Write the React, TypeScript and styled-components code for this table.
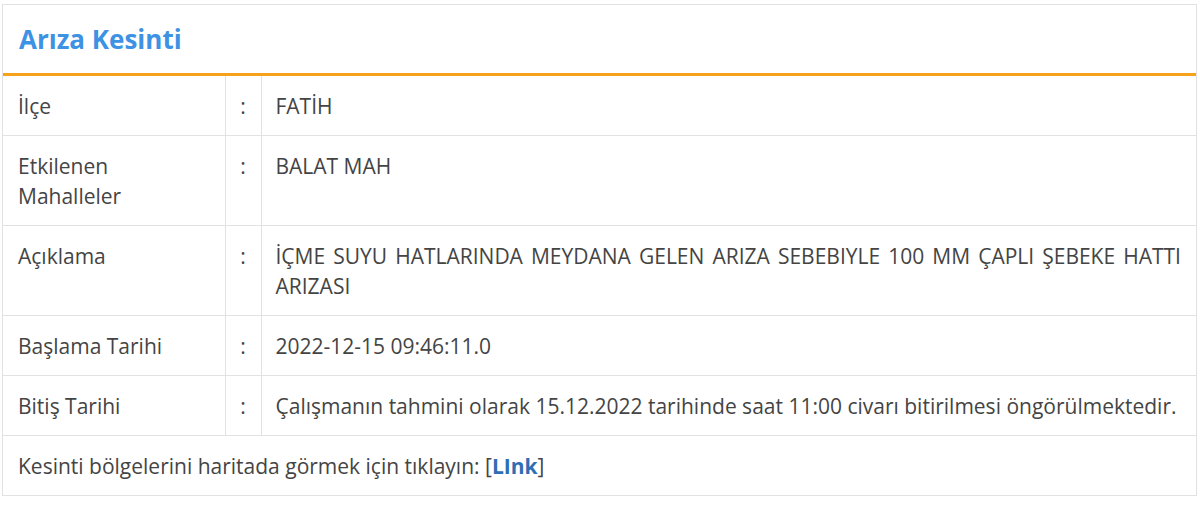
import styled, { createGlobalStyle } from "styled-components"

const GlobalStyle = createGlobalStyle`
  body {
    margin: 0;
    background: #fff;
    font-family: "Open Sans", "Noto Sans", sans-serif;
    color: #444;
  }
`

type Row = { label: string; value: string; justify?: boolean }

const rows: Row[] = [
  { label: "İlçe", value: "FATİH" },
  { label: "Etkilenen Mahalleler", value: "BALAT MAH" },
  {
    label: "Açıklama",
    value: "İÇME SUYU HATLARINDA MEYDANA GELEN ARIZA SEBEBIYLE 100 MM ÇAPLI ŞEBEKE HATTI ARIZASI",
    justify: true,
  },
  { label: "Başlama Tarihi", value: "2022-12-15 09:46:11.0" },
  {
    label: "Bitiş Tarihi",
    value: "Çalışmanın tahmini olarak 15.12.2022 tarihinde saat 11:00 civarı bitirilmesi öngörülmektedir.",
  },
]

export default function App() {
  return (
    <>
      <GlobalStyle />
      <Panel>
        <Header>
          <Title>Arıza Kesinti</Title>
        </Header>
        <Table>
          <colgroup>
            <col style={{ width: 222 }} />
            <col style={{ width: 36 }} />
            <col />
          </colgroup>
          <tbody>
            {rows.map((r) => (
              <tr key={r.label}>
                <Label>{r.label}</Label>
                <Colon>:</Colon>
                <Value $justify={r.justify}>{r.value}</Value>
              </tr>
            ))}
            <tr>
              <Footer colSpan={3}>
                Kesinti bölgelerini haritada görmek için tıklayın: [<Link href="#">LInk</Link>]
              </Footer>
            </tr>
          </tbody>
        </Table>
      </Panel>
    </>
  )
}

const Panel = styled.div`
  margin: 4px 0 0 2px;
  width: 1195px;
  box-sizing: border-box;
  border: 1px solid #e2e2e2;
  background: #fff;
`

const Header = styled.div`
  height: 68px;
  display: flex;
  align-items: center;
  padding: 0 16px;
  border-bottom: 3px solid #f7a21b;
`

const Title = styled.h3`
  margin: 0;
  font-size: 26px;
  font-weight: 700;
  color: #3d92e4;
`

const Table = styled.table`
  width: 100%;
  border-collapse: collapse;
  table-layout: fixed;
  font-size: 21px;
  line-height: 30px;

  td {
    border-top: 1px solid #e2e2e2;
    vertical-align: top;
  }
  tr:first-child td {
    border-top: none;
  }
`

const Label = styled.td`
  padding: 15px 15px 14px 15px;
  border-right: 1px solid #e2e2e2;
`

const Colon = styled.td`
  padding: 15px 0 14px;
  text-align: center;
  border-right: 1px solid #e2e2e2;
`

const Value = styled.td<{ $justify?: boolean }>`
  padding: 15px 15px 14px 14px;
  text-align: ${(p) => (p.$justify ? "justify" : "left")};
`

const Footer = styled.td`
  padding: 15px 15px 14px 15px;
`

const Link = styled.a`
  color: #2f6db5;
  font-weight: 700;
  text-decoration: none;
`
